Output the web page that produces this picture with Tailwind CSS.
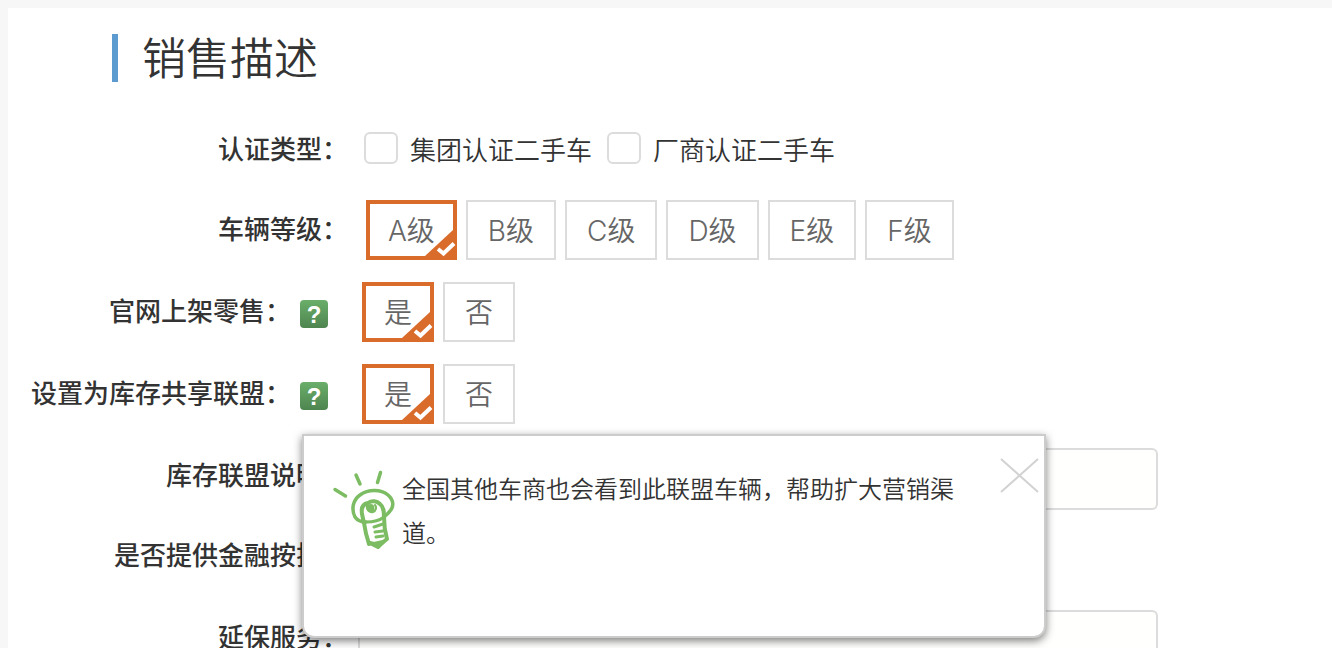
<!DOCTYPE html>
<html lang="zh-CN">
<head>
  <meta charset="UTF-8">
  <meta name="viewport" content="width=device-width, initial-scale=1.0">
  <title>销售描述</title>
  <script src="https://cdn.jsdelivr.net/npm/@tailwindcss/browser@4"></script>
</head>
<body class="h-screen overflow-hidden bg-[#f7f7f7] pt-2 pl-2 font-['Liberation_Sans','Noto_Sans_CJK_SC',sans-serif] text-[#333]">
  <main class="relative min-h-screen bg-white pt-[26px]">
    <h1 class="ml-[104px] h-12 border-l-6 border-[#5b9bd0] pl-6 text-[44px] leading-[52px] font-[350]">销售描述</h1>

    <form>
      <!-- 认证类型 -->
      <div class="mt-[38px] flex h-[60px] items-start">
        <span class="w-[340px] shrink-0 text-right text-[26px] leading-[60px] font-medium">认证类型：</span>
        <div class="ml-4 flex h-[56px] items-center gap-[15px] text-[26px]">
          <label class="flex items-center gap-3">
            <input type="checkbox" class="h-8 w-[34px] appearance-none rounded-md border-2 border-[#dcdcdc] bg-white">
            <span class="pt-1.5 leading-8 font-[350]">集团认证二手车</span>
          </label>
          <label class="flex items-center gap-3">
            <input type="checkbox" class="h-8 w-[34px] appearance-none rounded-md border-2 border-[#dcdcdc] bg-white">
            <span class="pt-1.5 leading-8 font-[350]">厂商认证二手车</span>
          </label>
        </div>
      </div>

      <!-- 车辆等级 -->
      <div class="mt-5 flex items-start">
        <span class="w-[340px] shrink-0 text-right text-[26px] leading-[60px] font-medium">车辆等级：</span>
        <div class="ml-[18px] flex gap-[9px] font-['Inter','Noto_Sans_CJK_SC',sans-serif] text-[28px] font-[350] text-[#666]">
          <button type="button" class="relative h-[60px] border-4 border-[#d96b2b] px-[18px] leading-[54px]">A级
            <svg class="absolute -right-1 -bottom-1" width="32" height="30" viewBox="0 0 32 30"><path d="M0 30V26L28 0h4v30z" fill="#d96b2b"/><path d="M13 19l5.500 4.500 10.500-10" fill="none" stroke="#fff" stroke-width="4"/></svg>
          </button>
          <button type="button" class="h-[60px] border-2 border-[#dcdcdc] px-5 leading-[58px]">B级</button>
          <button type="button" class="h-[60px] border-2 border-[#dcdcdc] px-5 leading-[58px]">C级</button>
          <button type="button" class="h-[60px] border-2 border-[#dcdcdc] px-5 leading-[58px]">D级</button>
          <button type="button" class="h-[60px] border-2 border-[#dcdcdc] px-5 leading-[58px]">E级</button>
          <button type="button" class="h-[60px] border-2 border-[#dcdcdc] px-5 leading-[58px]">F级</button>
        </div>
      </div>

      <!-- 官网上架零售 -->
      <div class="mt-[22px] flex items-start">
        <div class="flex w-[320px] shrink-0 items-start justify-end gap-[9px]">
          <span class="text-[26px] leading-[60px] font-medium whitespace-nowrap">官网上架零售：</span>
          <button type="button" class="mt-[18px] h-7 w-7 rounded-sm bg-linear-to-b from-[#6aae6a] to-[#4f8550] text-[24px] leading-[30px] font-bold text-white">?</button>
        </div>
        <div class="ml-[34px] flex gap-[9px] text-[28px] font-[350] text-[#666]">
          <button type="button" class="relative h-[60px] border-4 border-[#d96b2b] px-[18px] leading-[56px]">是
            <svg class="absolute -right-1 -bottom-1" width="32" height="30" viewBox="0 0 32 30"><path d="M0 30V26L28 0h4v30z" fill="#d96b2b"/><path d="M13 19l5.500 4.500 10.500-10" fill="none" stroke="#fff" stroke-width="4"/></svg>
          </button>
          <button type="button" class="h-[60px] border-2 border-[#dcdcdc] px-5 leading-[60px]">否</button>
        </div>
      </div>

      <!-- 库存共享联盟 -->
      <div class="mt-[22px] flex items-start">
        <div class="flex w-[320px] shrink-0 items-start justify-end gap-[9px]">
          <span class="text-[26px] leading-[60px] font-medium whitespace-nowrap">设置为库存共享联盟：</span>
          <button type="button" class="mt-[18px] h-7 w-7 rounded-sm bg-linear-to-b from-[#6aae6a] to-[#4f8550] text-[24px] leading-[30px] font-bold text-white">?</button>
        </div>
        <div class="ml-[34px] flex gap-[9px] text-[28px] font-[350] text-[#666]">
          <button type="button" class="relative h-[60px] border-4 border-[#d96b2b] px-[18px] leading-[56px]">是
            <svg class="absolute -right-1 -bottom-1" width="32" height="30" viewBox="0 0 32 30"><path d="M0 30V26L28 0h4v30z" fill="#d96b2b"/><path d="M13 19l5.500 4.500 10.500-10" fill="none" stroke="#fff" stroke-width="4"/></svg>
          </button>
          <button type="button" class="h-[60px] border-2 border-[#dcdcdc] px-5 leading-[60px]">否</button>
        </div>
      </div>

      <div class="mt-6 flex items-start">
        <label for="union-note" class="w-[340px] shrink-0 text-right text-[26px] leading-[56px] font-medium">库存联盟说明：</label>
        <input id="union-note" type="text" class="ml-[10px] h-[62px] w-[800px] rounded-md border-2 border-[#dcdcdc] bg-[#fffffd] px-4 text-[26px]">
      </div>

      <div class="mt-4 flex h-[60px] items-start">
        <span class="w-[340px] shrink-0 text-right text-[26px] leading-[60px] font-medium">是否提供金融按揭：</span>
      </div>

      <div class="mt-6 flex items-start">
        <label for="warranty" class="w-[340px] shrink-0 text-right text-[26px] leading-[56px] font-medium">延保服务：</label>
        <input id="warranty" type="text" class="ml-[10px] h-[62px] w-[800px] rounded-md border-2 border-[#dcdcdc] bg-[#fffffd] px-4 text-[26px]">
      </div>
    </form>

    <!-- 提示浮层 -->
    <div class="absolute top-[426px] left-[294px] flex h-[204px] w-[744px] items-start rounded-b-xl border-2 border-[#ccc] bg-white pt-8 pl-7 shadow-[0_3px_8px_rgba(0,0,0,0.5)]">
      <svg class="shrink-0" width="66" height="84" viewBox="0 0 66 84" fill="none" stroke="#7cbc62" stroke-width="4" stroke-linecap="round" stroke-linejoin="round">
        <path d="M3 21.500L13.500 28M24 7l4 9M48.500 4.500L45.500 14.500" stroke-width="3.500"/>
        <path d="M34 54c-5 0-9-2-11-5-4-8-2-17 5-22 8-6 21-6 28 0 6 5 6 12 2 16-2 3-4 4-6 6" stroke-width="3.500"/>
        <path d="M37 76c-3-9-4-14-5-21l-2-9c-1-6 1-10 6-11 4-3 9-2 12 1 4 3 4 8 4 13 0 7 1 15 3 22l-5 4"/>
        <path d="M34 54c7 0 13-1 18-5M42 59l9-3M43 64l8-1M44 69l7-1" stroke-width="3"/>
        <path d="M35 37c-1 5 3 8 6 7s4-5 2-7" stroke-width="2"/>
        <circle cx="38.500" cy="40" r="4" fill="#7cbc62" stroke="none"/>
        <path d="M38 75l4 1 9-2-5 5z" fill="#7cbc62"/>
      </svg>
      <p class="ml-1 w-[560px] text-[24px] leading-[44px] font-[350]">全国其他车商也会看到此联盟车辆，帮助扩大营销渠道。</p>
      <button type="button" aria-label="关闭" class="ml-auto mt-[-10px] mr-1">
        <svg width="40" height="36" viewBox="0 0 40 36" fill="none" stroke="#d2d2d2" stroke-width="2"><path d="M1 1l37 33M38 1L1 34"/></svg>
      </button>
    </div>
  </main>
</body>
</html>
